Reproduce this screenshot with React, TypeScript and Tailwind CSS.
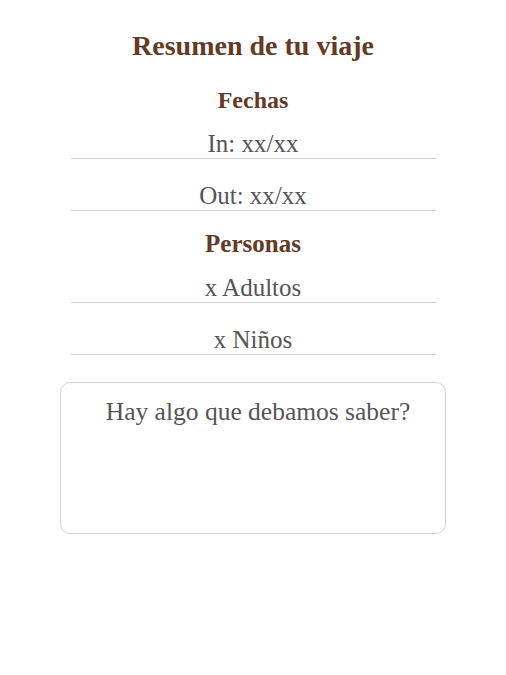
import React, { useState } from "react";

function Row({ placeholder, first }: { placeholder: string; first?: boolean }) {
  const [value, setValue] = useState("");
  return (
    <input
      value={value}
      onChange={(e) => setValue(e.target.value)}
      placeholder={placeholder}
      className={`${first ? "mt-[15px]" : "mt-[22px]"} h-[30px] w-[365px] border-b border-[#d4d4d4] bg-transparent text-center text-[25px] leading-[30px] text-[#555] outline-none placeholder:text-[#555]`}
    />
  );
}

export default function App() {
  const [notes, setNotes] = useState("");

  return (
    <div
      className="flex min-h-[675px] w-full flex-col items-center bg-white"
      style={{ fontFamily: '"Liberation Serif", serif' }}
    >
      <h1 className="mt-[30px] text-[28px] font-bold leading-[32px] text-[#643a26]">
        Resumen de tu viaje
      </h1>

      <h2 className="mt-[24px] text-[24px] font-bold leading-[28px] text-[#643a26]">
        Fechas
      </h2>
      <Row placeholder="In: xx/xx" first />
      <Row placeholder="Out: xx/xx" />

      <h2 className="mt-[19px] text-[25px] font-bold leading-[28px] text-[#643a26]">
        Personas
      </h2>
      <Row placeholder="x Adultos" first />
      <Row placeholder="x Niños" />

      <textarea
        value={notes}
        onChange={(e) => setNotes(e.target.value)}
        placeholder="Hay algo que debamos saber?"
        className="mt-[27px] h-[152px] w-[386px] resize-none rounded-[10px] border border-[#d4d4d4] pl-[22px] pr-[12px] pt-[15px] text-center text-[25.5px] leading-[28px] text-[#555] outline-none placeholder:text-[#555]"
      />
    </div>
  );
}
